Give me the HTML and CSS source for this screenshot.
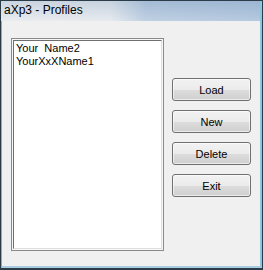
FILE: index.html
```html
<!DOCTYPE html>
<html lang="en">
<head>
  <meta charset="UTF-8">
  <title>aXp3 - Profiles</title>
  <link rel="stylesheet" href="styles.css">
</head>
<body>
  <div class="window">
    <div class="window-title">aXp3 - Profiles</div>

    <div class="window-client">
      <div class="profile-list">
        <div class="profile-list-inner">
          <div class="profile-item">Your&nbsp; Name2</div>
          <div class="profile-item">YourXxXName1</div>
        </div>
      </div>

      <div class="profile-options">
        <button class="btn">Load</button>
        <button class="btn">New</button>
        <button class="btn">Delete</button>
        <button class="btn">Exit</button>
      </div>
    </div>
  </div>
</body>
</html>
```

FILE: styles.css
```css
html, body {
  margin: 0;
  padding: 0;
  box-sizing: border-box;
  background-color: #f0f0f0;
}
*, *:before, *:after { box-sizing: inherit; }

.window {
  width: 263px;
  height: 270px;
  display: flex;
  flex-direction: column;
  border-left: 1px solid #2c3b48;
  border-right: 1px solid #2c3b48;
  border-top: 1px solid #2c3b48;
  border-bottom: 2px solid #2c3b48;
  background-color: #f0f0f0;
}

.window-title {
  height: 20px;
  padding: 2px 0 0 3px;
  font-family: "Liberation Sans", Arial, sans-serif;
  font-size: 12px;
  color: #000;
  border-right: 2px solid #8fc6dd;
  background:
    linear-gradient(to bottom, rgba(120, 150, 185, 0.25), rgba(255, 255, 255, 0.15)),
    linear-gradient(to right, #e6e9ed 0%, #e2e7ec 42%, #b4c8de 56%, #a9c0da 100%);
}

.window-client {
  flex: 1;
  display: flex;
  padding: 17px 0 0 9px;
  border-left: 1px solid #9aa7b3;
  border-right: 2px solid #8fc6dd;
  border-bottom: 2px solid #a9cde0;
}

.profile-list {
  width: 153px;
  height: 213px;
  padding: 1px;
  border: 1px solid #8a8a8a;
  background-color: #f7f7f7;
}
.profile-list-inner {
  height: 100%;
  padding: 1px 2px;
  border-top: 1px solid #6f6f6f;
  border-left: 1px solid #6f6f6f;
  border-right: 1px solid #dedede;
  border-bottom: 1px solid #dedede;
  background-color: #fff;
  font-family: "Liberation Sans", Arial, sans-serif;
  font-size: 11px;
  line-height: 13px;
  color: #000;
}

.profile-options {
  display: flex;
  flex-direction: column;
  gap: 9px;
  padding: 40px 0 0 8px;
}

.btn {
  width: 79px;
  height: 23px;
  padding: 0;
  border: 1px solid #707070;
  border-radius: 3px;
  background: linear-gradient(to bottom, #f2f2f2 0%, #ebebeb 50%, #dddddd 51%, #cfcfcf 100%);
  box-shadow: inset 0 0 0 1px rgba(255, 255, 255, 0.6);
  font-family: "Liberation Sans", Arial, sans-serif;
  font-size: 11px;
  color: #000;
  outline: none;
}
```
